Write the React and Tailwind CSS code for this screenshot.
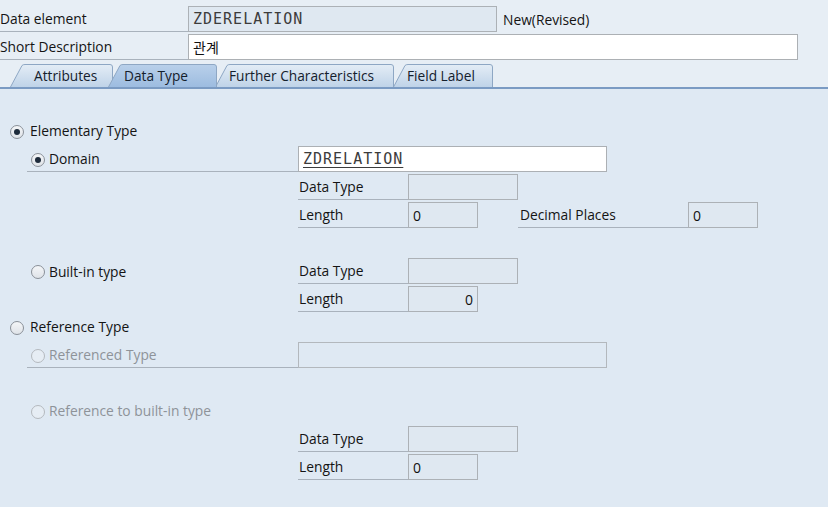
import React from "react";

const font = "font-['Open_Sans','Noto_Sans_CJK_KR',sans-serif]";
const mono = "font-['DejaVu_Sans_Mono','Noto_Sans_CJK_KR',monospace]";

function Radio({ checked, disabled }) {
  return (
    <span
      className={
        "relative inline-flex h-[14px] w-[14px] shrink-0 items-center justify-center rounded-full border " +
        (disabled
          ? "border-[#b4b9be] bg-[#e6edf4]"
          : "border-[#8a9098] bg-gradient-to-b from-[#f4f6f8] to-[#dfe3e8]")
      }
    >
      {checked && <span className="h-[6px] w-[6px] rounded-full bg-[#1d2b3b]" />}
    </span>
  );
}

function Tab({ label, active, width, className = "", textPad = "pl-[16px]" }) {
  const id = label.replace(/\s/g, "");
  return (
    <div className={"relative h-[23px] shrink-0 " + className} style={{ width }}>
      <svg className="absolute inset-0" width={width} height="23" viewBox={`0 0 ${width} 23`}>
        <defs>
          <linearGradient id={"g" + id} x1="0" y1="0" x2="0" y2="1">
            {active ? (
              <>
                <stop offset="0" stopColor="#b9d0ea" />
                <stop offset="1" stopColor="#9dbce0" />
              </>
            ) : (
              <>
                <stop offset="0" stopColor="#e4edf6" />
                <stop offset="1" stopColor="#bfd3e8" />
              </>
            )}
          </linearGradient>
        </defs>
        <path
          d={`M0.5 23 L12 1.5 Q13 0.5 15 0.5 L${width - 3} 0.5 Q${width - 0.5} 0.5 ${width - 0.5} 3 L${width - 0.5} 23`}
          fill={`url(#g${id})`}
          stroke="#8ea7c4"
          strokeWidth="1"
        />
      </svg>
      <span className={"relative block pt-[2px] text-[13.7px] leading-[20px] text-[#14202c] " + textPad}>{label}</span>
    </div>
  );
}

function Field({ w, value, white, right, monoText, underline }) {
  return (
    <div
      className={
        "flex h-[26px] shrink-0 items-center border px-[4px] pt-[1px] " +
        (white ? "border-[#acb0b4] bg-white " : "border-[#acb1b6] bg-[#dfe8f1] ") +
        (right ? "justify-end " : "")
      }
      style={{ width: w }}
    >
      {value && (
        <span
          className={
            (monoText ? mono + " text-[15px] tracking-[1px] text-[#3c3c3c] " : "text-[14px] text-[#111] ") +
            (underline ? "underline underline-offset-[3px] decoration-1 " : "") +
            "leading-none"
          }
        >
          {value}
        </span>
      )}
    </div>
  );
}

function Label({ w, children, disabled, className = "" }) {
  return (
    <div
      className={
        "flex h-[26px] shrink-0 items-center border-b border-[#a9b2bc] pt-[2px] text-[13.8px] " +
        (disabled ? "text-[#8e9399] " : "text-[#141414] ") +
        className
      }
      style={{ width: w }}
    >
      {children}
    </div>
  );
}

function Row({ children, className = "" }) {
  return <div className={"flex h-[28px] items-center " + className}>{children}</div>;
}

export default function App() {
  return (
    <div className={"h-[507px] w-[828px] overflow-hidden bg-[#dfe9f3] " + font}>
      {/* header */}
      <div className="bg-[#e7eef5] pt-[5px]">
        <Row>
          <Label w={188}>Data element</Label>
          <Field w={309} value="ZDERELATION" monoText />
          <span className="ml-[6px] pt-[2px] text-[13.8px] text-[#141414]">New(Revised)</span>
        </Row>
        <Row>
          <Label w={188}>Short Description</Label>
          <Field w={610} value="관계" white />
        </Row>
        <div className="flex h-[28px] items-end border-b-2 border-[#7b9bc3] pl-[10px]">
          <Tab label="Attributes" width={103} textPad="pl-[24px]" />
          <Tab label="Data Type" width={109} active className="z-10 -ml-[5px]" />
          <Tab label="Further Characteristics" width={179} className="-ml-[2px]" textPad="pl-[14px]" />
          <Tab label="Field Label" width={100} className="-ml-[1px]" textPad="pl-[14px]" />
        </div>
      </div>

      {/* content */}
      <div className="pt-[28px]">
        <Row className="pl-[10px] pt-[1px] text-[13.8px] text-[#141414]">
          <Radio checked />
          <span className="ml-[6px]">Elementary Type</span>
        </Row>
        <Row className="pl-[27px]">
          <Label w={271} className="pl-[4px]">
            <Radio checked />
            <span className="ml-[4px]">Domain</span>
          </Label>
          <Field w={309} value="ZDRELATION" white monoText underline />
        </Row>
        <Row className="pl-[298px]">
          <Label w={110} className="pl-[1px]">Data Type</Label>
          <Field w={110} />
        </Row>
        <Row className="pl-[298px]">
          <Label w={110} className="pl-[1px]">Length</Label>
          <Field w={70} value="0" />
          <Label w={170} className="ml-[40px] pl-[2px]">Decimal Places</Label>
          <Field w={70} value="0" />
        </Row>
        <Row />
        <Row className="pl-[31px]">
          <div className="flex w-[267px] items-center pt-[2px] text-[13.8px] text-[#141414]">
            <Radio />
            <span className="ml-[4px]">Built-in type</span>
          </div>
          <Label w={110} className="pl-[1px]">Data Type</Label>
          <Field w={110} />
        </Row>
        <Row className="pl-[298px]">
          <Label w={110} className="pl-[1px]">Length</Label>
          <Field w={70} value="0" right />
        </Row>
        <Row className="pl-[10px] pt-[1px] text-[13.8px] text-[#141414]">
          <Radio />
          <span className="ml-[6px]">Reference Type</span>
        </Row>
        <Row className="pl-[27px]">
          <Label w={271} disabled className="pl-[4px]">
            <Radio disabled />
            <span className="ml-[4px]">Referenced Type</span>
          </Label>
          <div className="h-[26px] w-[309px] border border-[#b3b8bd] bg-[#dfe9f3]" />
        </Row>
        <Row />
        <Row className="pl-[31px] pt-[1px] text-[13.8px] text-[#8e9399]">
          <Radio disabled />
          <span className="ml-[4px]">Reference to built-in type</span>
        </Row>
        <Row className="pl-[298px]">
          <Label w={110} className="pl-[1px]">Data Type</Label>
          <Field w={110} />
        </Row>
        <Row className="pl-[298px]">
          <Label w={110} className="pl-[1px]">Length</Label>
          <Field w={70} value="0" />
        </Row>
      </div>
    </div>
  );
}
